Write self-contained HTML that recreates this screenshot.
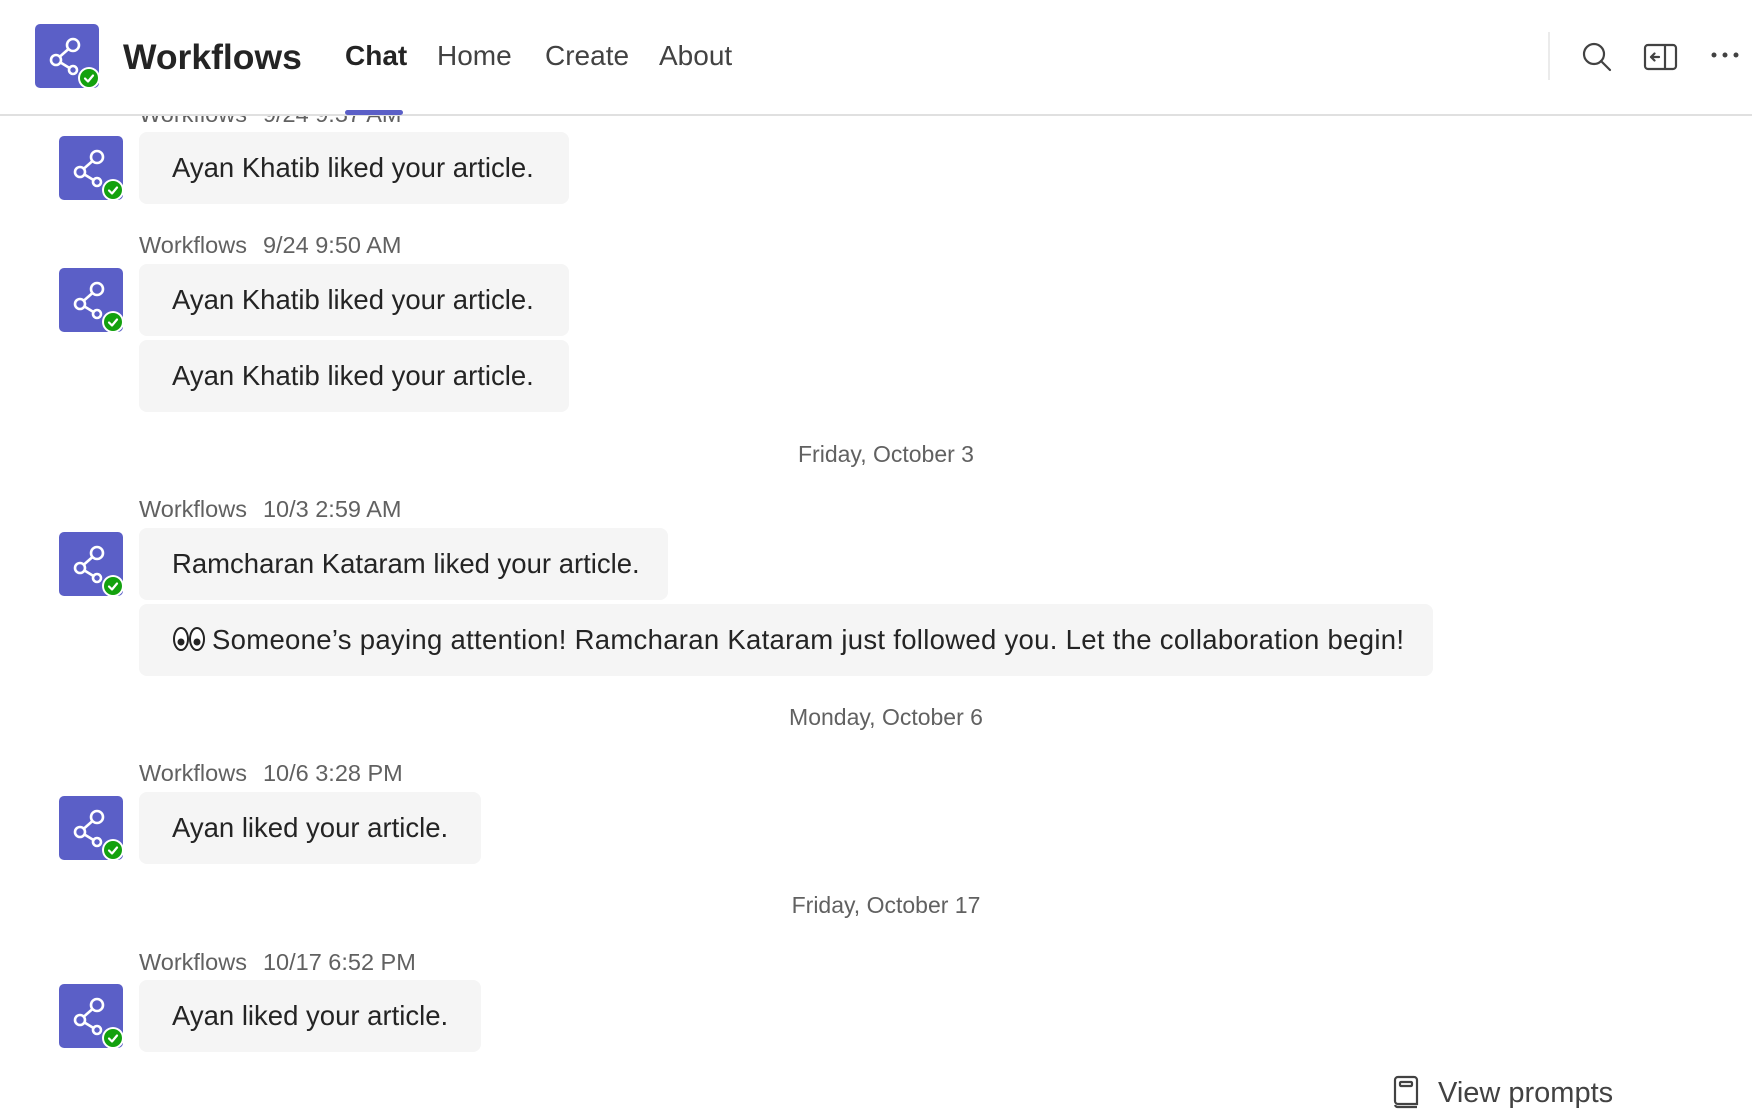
<!DOCTYPE html>
<html><head><meta charset="utf-8"><style>
*{margin:0;padding:0;box-sizing:border-box}
body{width:1752px;height:1118px;overflow:hidden;background:#fff;font-family:"Segoe UI","Liberation Sans",sans-serif;color:#242424;position:relative}
.abs{position:absolute}
.hdr{position:absolute;left:0;top:0;width:1752px;height:116px;background:#fff;border-bottom:2px solid #e0e0e0;z-index:5}
.tab{position:absolute;top:38px;font-size:28px;color:#424242;line-height:36px}
.av{position:absolute;left:59px;width:64px;height:64px}
.bub{position:absolute;left:139px;height:72px;background:#f5f5f5;border-radius:8px;font-size:27.5px;line-height:72px;padding-left:33px;white-space:nowrap;color:#242424}
.meta{position:absolute;left:139px;font-size:23.5px;color:#616161;line-height:28px;white-space:nowrap}
.meta span{margin-left:16px}
.day{position:absolute;left:0;width:1772px;text-align:center;font-size:23px;color:#616161;line-height:28px}
</style></head><body>
<svg width="0" height="0" style="position:absolute"><defs>
<symbol id="avi" viewBox="0 0 64 64">
<rect x="0" y="0" width="64" height="64" rx="5" fill="#5b5fc7"/>
<g fill="none" stroke="#fff" stroke-width="2.6">
<circle cx="38" cy="21" r="6"/><circle cx="21" cy="36" r="5"/><circle cx="38" cy="46" r="4"/>
<line x1="33.5" y1="25" x2="25" y2="32.5"/><line x1="25.5" y1="38.5" x2="34.5" y2="44"/>
</g>
<circle cx="54" cy="54" r="11" fill="#fff"/><circle cx="54" cy="54" r="9" fill="#13a10e"/>
<path d="M50 54.5l3 3 5-6" fill="none" stroke="#fff" stroke-width="2.2" stroke-linecap="round" stroke-linejoin="round"/>
</symbol></defs></svg>

<div class="hdr">
<svg class="abs" style="left:35px;top:24px" width="64" height="64"><use href="#avi"/></svg>
<div class="abs" style="left:123px;top:36px;font-size:35.5px;font-weight:bold;color:#242424;line-height:42px">Workflows</div>
<div class="tab" style="left:345px;font-weight:bold;color:#242424">Chat</div>
<div class="tab" style="left:437px">Home</div>
<div class="tab" style="left:545px">Create</div>
<div class="tab" style="left:659px">About</div>
<div class="abs" style="left:345px;top:110px;width:58px;height:5px;background:#5b5fc7;border-radius:3px"></div>
<div class="abs" style="left:1548px;top:32px;width:2px;height:48px;background:#ebebeb"></div>
<svg class="abs" style="left:1580px;top:40px" width="34" height="34" viewBox="0 0 34 34" fill="none" stroke="#424242" stroke-width="2.2"><circle cx="14" cy="14" r="10"/><line x1="21" y1="21" x2="30" y2="30" stroke-linecap="round"/></svg>
<svg class="abs" style="left:1643px;top:43px" width="36" height="28" viewBox="0 0 36 28" fill="none" stroke="#424242" stroke-width="2.2"><rect x="2" y="2" width="31" height="24" rx="3"/><line x1="22" y1="2" x2="22" y2="26"/><path d="M16 14H8M11.5 10.5L8 14l3.5 3.5" stroke-linecap="round" stroke-linejoin="round"/></svg>
<svg class="abs" style="left:1710px;top:50px" width="30" height="10" viewBox="0 0 30 10" fill="#424242"><circle cx="4" cy="5" r="2.5"/><circle cx="15" cy="5" r="2.5"/><circle cx="26" cy="5" r="2.5"/></svg>
</div>

<div class="meta" style="top:100px">Workflows<span>9/24 9:37 AM</span></div>
<svg class="av" style="top:136px"><use href="#avi"/></svg>
<div class="bub" style="top:132px;width:430px">Ayan Khatib liked your article.</div>

<div class="meta" style="top:231px">Workflows<span>9/24 9:50 AM</span></div>
<svg class="av" style="top:268px"><use href="#avi"/></svg>
<div class="bub" style="top:264px;width:430px">Ayan Khatib liked your article.</div>
<div class="bub" style="top:340px;width:430px">Ayan Khatib liked your article.</div>

<div class="day" style="top:440px">Friday, October 3</div>

<div class="meta" style="top:495px">Workflows<span>10/3 2:59 AM</span></div>
<svg class="av" style="top:532px"><use href="#avi"/></svg>
<div class="bub" style="top:528px;width:529px">Ramcharan Kataram liked your article.</div>
<div class="bub" style="top:604px;width:1294px;letter-spacing:0.3px"><svg width="34" height="28" viewBox="0 0 34 28" style="vertical-align:-4px;margin-right:6px"><g stroke="#242424" stroke-width="2" fill="#fff"><ellipse cx="9" cy="14" rx="7" ry="11"/><ellipse cx="25" cy="14" rx="7" ry="11"/></g><circle cx="9" cy="17" r="3.5" fill="#242424"/><circle cx="25" cy="17" r="3.5" fill="#242424"/></svg>Someone’s paying attention! Ramcharan Kataram just followed you. Let the collaboration begin!</div>

<div class="day" style="top:703px">Monday, October 6</div>

<div class="meta" style="top:759px">Workflows<span>10/6 3:28 PM</span></div>
<svg class="av" style="top:796px"><use href="#avi"/></svg>
<div class="bub" style="top:792px;width:342px">Ayan liked your article.</div>

<div class="day" style="top:891px">Friday, October 17</div>

<div class="meta" style="top:948px">Workflows<span>10/17 6:52 PM</span></div>
<svg class="av" style="top:984px"><use href="#avi"/></svg>
<div class="bub" style="top:980px;width:342px">Ayan liked your article.</div>

<svg class="abs" style="left:1393px;top:1075px" width="26" height="34" viewBox="0 0 26 34" fill="none" stroke="#424242" stroke-width="2.2"><path d="M5 2h16a3 3 0 0 1 3 3v24H5a3 3 0 0 1-3-3V5a3 3 0 0 1 3-3z"/><rect x="7" y="7" width="12" height="4" rx="1"/><path d="M2 30a3 3 0 0 0 3 2h19"/></svg>
<div class="abs" style="left:1438px;top:1075px;font-size:29px;color:#424242;line-height:36px">View prompts</div>
</body></html>
